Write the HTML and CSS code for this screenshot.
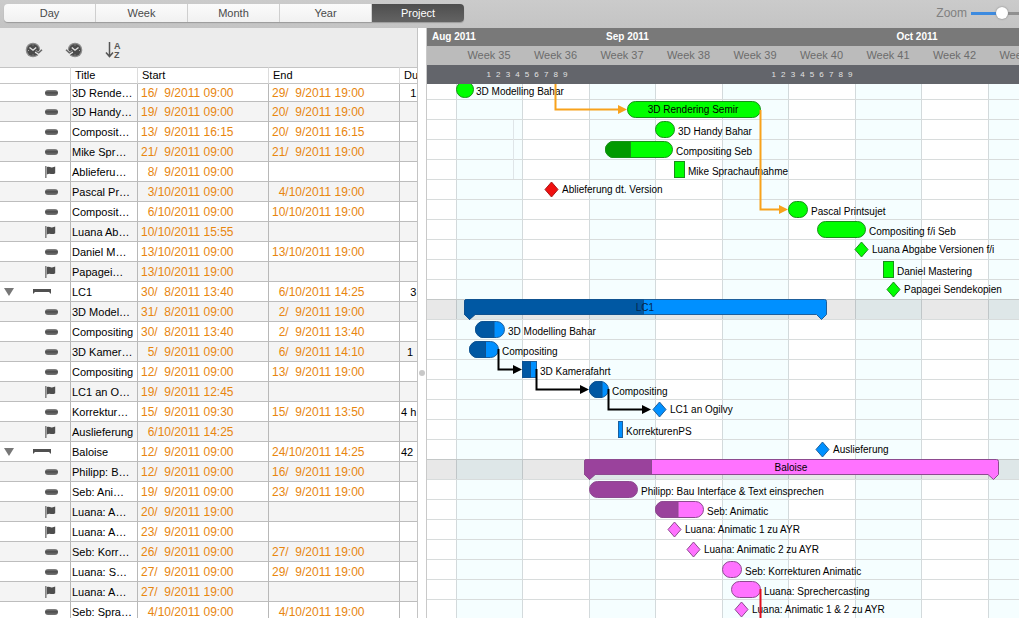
FILE: index.html
```html
<!DOCTYPE html>
<html lang="en">
<head>
<meta charset="utf-8">
<title>Project timeline</title>
<link rel="stylesheet" href="styles.css">
</head>
<body>
<svg class="defs" aria-hidden="true">
  <defs>
    <linearGradient id="pillFill" x1="0" y1="0" x2="0" y2="1">
      <stop offset="0" stop-color="#8a8a8a"/><stop offset=".45" stop-color="#4c4c4c"/><stop offset="1" stop-color="#777"/>
    </linearGradient>
    <symbol id="pill" viewBox="0 0 14 12"><rect x="1" y="3" width="13" height="6" rx="3" fill="url(#pillFill)"/></symbol>
    <symbol id="flag" viewBox="0 0 14 12"><path d="M1 0h1.6v12H1z" fill="#888"/><path d="M2.8 1.2c2-1 3.600.6 5.200.2 1.300-.2 2.200-.7 3.200-.9v6.800c-1.600 1-3 .9-4.600.6-1.500-.2-2.600-.1-3.800.5z" fill="#4e4e4e"/></symbol>
    <symbol id="group" viewBox="0 0 20 12"><path d="M1 3h18v5l-2-2H3L1 8z" fill="#505050"/></symbol>
    <symbol id="clock" viewBox="0 0 18 16"><circle cx="8" cy="8" r="7.300" fill="#8b8b8b"/><circle cx="8" cy="8" r="6" fill="#4b4b4b"/><path d="M4.500 5.500 8 8.200l3.200-2.700" fill="none" stroke="#e4e4e4" stroke-width="1.400"/><path d="M8 2.500v1M3 8.500h1M8 12.500v1" stroke="#aaa"/><path d="M10.500 9.500l3.200 1.800 3-3" fill="none" stroke="#ececec" stroke-width="3"/><path d="M10.500 8.800l3.200 2 3.300-3" fill="none" stroke="#666" stroke-width="1.500"/></symbol>
  </defs>
</svg>

<div class="app">
  <header class="topbar">
    <nav class="segments" aria-label="Time scale">
      <button type="button">Day</button>
      <button type="button">Week</button>
      <button type="button">Month</button>
      <button type="button">Year</button>
      <button type="button" class="active" aria-pressed="true">Project</button>
    </nav>
    <div class="zoom">
      <label for="zoom">Zoom</label>
      <input id="zoom" type="range" min="0" max="100" value="69">
    </div>
  </header>

  <main class="panes">
    <section class="outline">
      <div class="tools">
        <button type="button" aria-label="Later"><svg width="18" height="16"><use href="#clock"/></svg></button>
        <button type="button" aria-label="Earlier"><svg class="mirror" width="18" height="16"><use href="#clock"/></svg></button>
        <button type="button" aria-label="Sort"><svg width="18" height="18" viewBox="0 0 18 18"><path d="M4.500 1v14M1 11.500l3.500 4 3.500-4" fill="none" stroke="#555" stroke-width="1.500"/><text class="az" x="9" y="8">A</text><text class="az" x="9" y="17">Z</text></svg></button>
      </div>
      <table class="tasks">
        <colgroup><col class="c-icon"><col class="c-title"><col class="c-date"><col class="c-date"><col class="c-dur"></colgroup>
        <thead><tr><th></th><th>Title</th><th>Start</th><th>End</th><th>Du</th></tr></thead>
        <tbody>
          <tr><td><svg class="kind"><use href="#pill"/></svg></td><td>3D Rende…</td><td>16/  9/2011 09:00</td><td>29/  9/2011 19:00</td><td>   1</td></tr>
          <tr><td><svg class="kind"><use href="#pill"/></svg></td><td>3D Handy…</td><td>19/  9/2011 09:00</td><td>20/  9/2011 19:00</td><td></td></tr>
          <tr><td><svg class="kind"><use href="#pill"/></svg></td><td>Composit…</td><td>13/  9/2011 16:15</td><td>20/  9/2011 16:15</td><td></td></tr>
          <tr><td><svg class="kind"><use href="#pill"/></svg></td><td>Mike Spr…</td><td>21/  9/2011 09:00</td><td>21/  9/2011 19:00</td><td></td></tr>
          <tr><td><svg class="kind"><use href="#flag"/></svg></td><td>Ablieferu…</td><td>  8/  9/2011 09:00</td><td></td><td></td></tr>
          <tr><td><svg class="kind"><use href="#pill"/></svg></td><td>Pascal Pr…</td><td>  3/10/2011 09:00</td><td>  4/10/2011 19:00</td><td></td></tr>
          <tr><td><svg class="kind"><use href="#pill"/></svg></td><td>Composit…</td><td>  6/10/2011 09:00</td><td>10/10/2011 19:00</td><td></td></tr>
          <tr><td><svg class="kind"><use href="#flag"/></svg></td><td>Luana Ab…</td><td>10/10/2011 15:55</td><td></td><td></td></tr>
          <tr><td><svg class="kind"><use href="#pill"/></svg></td><td>Daniel M…</td><td>13/10/2011 09:00</td><td>13/10/2011 19:00</td><td></td></tr>
          <tr><td><svg class="kind"><use href="#flag"/></svg></td><td>Papagei…</td><td>13/10/2011 19:00</td><td></td><td></td></tr>
          <tr><td><div class="parent"><button type="button" aria-label="Collapse LC1"></button><svg><use href="#group"/></svg></div></td><td>LC1</td><td>30/  8/2011 13:40</td><td>  6/10/2011 14:25</td><td>   3</td></tr>
          <tr><td><svg class="kind"><use href="#pill"/></svg></td><td>3D Model…</td><td>31/  8/2011 09:00</td><td>  2/  9/2011 19:00</td><td></td></tr>
          <tr><td><svg class="kind"><use href="#pill"/></svg></td><td>Compositing</td><td>30/  8/2011 13:40</td><td>  2/  9/2011 13:40</td><td></td></tr>
          <tr><td><svg class="kind"><use href="#pill"/></svg></td><td>3D Kamer…</td><td>  5/  9/2011 09:00</td><td>  6/  9/2011 14:10</td><td>  1</td></tr>
          <tr><td><svg class="kind"><use href="#pill"/></svg></td><td>Compositing</td><td>12/  9/2011 09:00</td><td>13/  9/2011 19:00</td><td></td></tr>
          <tr><td><svg class="kind"><use href="#flag"/></svg></td><td>LC1 an O…</td><td>19/  9/2011 12:45</td><td></td><td></td></tr>
          <tr><td><svg class="kind"><use href="#pill"/></svg></td><td>Korrektur…</td><td>15/  9/2011 09:30</td><td>15/  9/2011 13:50</td><td>4 h</td></tr>
          <tr><td><svg class="kind"><use href="#flag"/></svg></td><td>Auslieferung</td><td>  6/10/2011 14:25</td><td></td><td></td></tr>
          <tr><td><div class="parent"><button type="button" aria-label="Collapse Baloise"></button><svg><use href="#group"/></svg></div></td><td>Baloise</td><td>12/  9/2011 09:00</td><td>24/10/2011 14:25</td><td>42</td></tr>
          <tr><td><svg class="kind"><use href="#pill"/></svg></td><td>Philipp: B…</td><td>12/  9/2011 09:00</td><td>16/  9/2011 19:00</td><td></td></tr>
          <tr><td><svg class="kind"><use href="#pill"/></svg></td><td>Seb: Ani…</td><td>19/  9/2011 09:00</td><td>23/  9/2011 19:00</td><td></td></tr>
          <tr><td><svg class="kind"><use href="#flag"/></svg></td><td>Luana: A…</td><td>20/  9/2011 19:00</td><td></td><td></td></tr>
          <tr><td><svg class="kind"><use href="#flag"/></svg></td><td>Luana: A…</td><td>23/  9/2011 09:00</td><td></td><td></td></tr>
          <tr><td><svg class="kind"><use href="#pill"/></svg></td><td>Seb: Korr…</td><td>26/  9/2011 09:00</td><td>27/  9/2011 19:00</td><td></td></tr>
          <tr><td><svg class="kind"><use href="#pill"/></svg></td><td>Luana: S…</td><td>27/  9/2011 09:00</td><td>29/  9/2011 19:00</td><td></td></tr>
          <tr><td><svg class="kind"><use href="#flag"/></svg></td><td>Luana: A…</td><td>27/  9/2011 19:00</td><td></td><td></td></tr>
          <tr><td><svg class="kind"><use href="#pill"/></svg></td><td>Seb: Spra…</td><td>  4/10/2011 09:00</td><td>  4/10/2011 19:00</td><td></td></tr>
        </tbody>
      </table>
    </section>

    <div class="splitter" role="separator" aria-orientation="vertical"><span class="grip"></span></div>

    <section class="chart">
      <div class="scale months"><span class="first">Aug 2011</span><span>Sep 2011</span><span>Oct 2011</span></div>
      <div class="scale weeks"><span></span><span>Week 35</span><span>Week 36</span><span>Week 37</span><span>Week 38</span><span>Week 39</span><span>Week 40</span><span>Week 41</span><span>Week 42</span><span>Week 43</span></div>
      <div class="scale days">
        <div class="run"><span>1</span><span>2</span><span>3</span><span>4</span><span>5</span><span>6</span><span>7</span><span>8</span><span>9</span></div>
        <div class="run"><span>1</span><span>2</span><span>3</span><span>4</span><span>5</span><span>6</span><span>7</span><span>8</span><span>9</span></div>
      </div>
      <svg class="canvas" role="img" aria-label="Gantt chart">
        <defs>
          <pattern id="weekGrid" patternUnits="userSpaceOnUse" x="456" y="0" width="133" height="20">
            <rect width="66" height="20" fill="#f5feff"/>
            <path d="M.5 0v20M66.500 0v20" stroke="#d3dadc"/>
          </pattern>
          <pattern id="rowGrid" patternUnits="userSpaceOnUse" x="0" y="99" width="20" height="20">
            <path d="M0 .5h20" stroke="#d8dcdc"/>
          </pattern>
          <path id="diamond" d="M0-7.500 6.500 0 0 7.500-6.500 0z"/>
          <path id="arrow" d="M0 0-9-4.500v9z"/>
        </defs>
        <g transform="translate(-427 -84)">
          <rect x="456" y="84" width="4000" height="4000" fill="url(#weekGrid)"/>
          <rect x="427" y="84" width="4000" height="4000" fill="url(#rowGrid)"/>
          <path d="M513.500 120v59" stroke="#dfe5e8"/>
          <path class="band" d="M427 299h4000v20H427zM427 459h4000v20H427z"/>

          <g class="green">
            <rect x="456.500" y="81.500" width="17" height="16" rx="8"/>
            <rect x="627.500" y="101.500" width="133" height="16" rx="8"/>
            <rect x="655.500" y="121.500" width="19" height="16" rx="8"/>
            <rect x="605.500" y="141.500" width="67" height="16" rx="8"/>
            <path class="done" d="M630.500 141.500h-17a8 8 0 0 0 0 16h17z"/>
            <rect x="674.500" y="161.500" width="10" height="16"/>
            <rect x="788.500" y="201.500" width="19" height="16" rx="8"/>
            <rect x="817.500" y="221.500" width="48" height="16" rx="8"/>
            <use href="#diamond" x="861.500" y="249.500"/>
            <rect x="883.500" y="261.500" width="10" height="16"/>
            <use href="#diamond" x="893.500" y="289.500"/>
          </g>
          <use class="red" href="#diamond" x="551.500" y="189.500"/>

          <g class="blue">
            <path d="M466.500 299.500h358q2 0 2 2v13l-5 5-5-5H475l-5.500 5-5-5v-13q0-2 2-2z"/>
            <path class="done" d="M643.500 299.500h-177q-2 0-2 2v13l5 5 5.500-5h168.500z"/>
            <rect x="475.500" y="321.500" width="29" height="16" rx="8"/>
            <path class="done" d="M494 321.500h-10.500a8 8 0 0 0 0 16H494z"/>
            <rect x="469.500" y="341.500" width="29" height="16" rx="8"/>
            <path class="done" d="M485.500 341.500h-8a8 8 0 0 0 0 16h8z"/>
            <rect x="522.500" y="361.500" width="14" height="16"/>
            <path class="done" d="M522.500 361.500h8v16h-8z"/>
            <rect x="589.500" y="381.500" width="19" height="16" rx="8"/>
            <path class="done" d="M602 381.500h-4.500a8 8 0 0 0 0 16h4.500z"/>
            <use href="#diamond" x="659.500" y="409.500"/>
            <rect x="618.500" y="421.500" width="4" height="16"/>
            <use href="#diamond" x="822.500" y="449.500"/>
          </g>

          <g class="pink">
            <path d="M586.500 459.500h410q2 0 2 2v13l-5 5-5.500-5H595l-5.500 5-5-5v-13q0-2 2-2z"/>
            <path class="done" d="M651.500 459.500h-65q-2 0-2 2v13l5 5 5.500-5h56.500z"/>
            <rect class="done" x="589.500" y="481.500" width="48" height="16" rx="8"/>
            <rect x="655.500" y="501.500" width="48" height="16" rx="8"/>
            <path class="done" d="M678 501.500h-14.500a8 8 0 0 0 0 16H678z"/>
            <use href="#diamond" x="674.500" y="529.500"/>
            <use href="#diamond" x="693.500" y="549.500"/>
            <rect x="722.500" y="561.500" width="19" height="16" rx="8"/>
            <rect x="731.500" y="581.500" width="29" height="16" rx="8"/>
            <use href="#diamond" x="741.500" y="609.500"/>
          </g>

          <g class="labels">
            <text x="476" y="95">3D Modelling Bahar</text>
            <text class="mid" x="693" y="113">3D Rendering Semir</text>
            <text x="678" y="135">3D Handy Bahar</text>
            <text x="676" y="155">Compositing Seb</text>
            <text x="688" y="175">Mike Sprachaufnahme</text>
            <text x="562" y="193">Ablieferung dt. Version</text>
            <text x="811" y="215">Pascal Printsujet</text>
            <text x="869" y="235">Compositing f/i Seb</text>
            <text x="872" y="253">Luana Abgabe Versionen f/i</text>
            <text x="897" y="275">Daniel Mastering</text>
            <text x="904" y="293">Papagei Sendekopien</text>
            <text class="mid navy" x="645" y="311">LC1</text>
            <text x="508" y="335">3D Modelling Bahar</text>
            <text x="502" y="355">Compositing</text>
            <text x="540" y="375">3D Kamerafahrt</text>
            <text x="612" y="395">Compositing</text>
            <text x="670" y="413">LC1 an Ogilvy</text>
            <text x="626" y="435">KorrekturenPS</text>
            <text x="833" y="453">Auslieferung</text>
            <text class="mid" x="791" y="471">Baloise</text>
            <text x="641" y="495">Philipp: Bau Interface &amp; Text einsprechen</text>
            <text x="707" y="515">Seb: Animatic</text>
            <text x="685" y="533">Luana: Animatic 1 zu AYR</text>
            <text x="704" y="553">Luana: Animatic 2 zu AYR</text>
            <text x="745" y="575">Seb: Korrekturen Animatic</text>
            <text x="764" y="595">Luana: Sprechercasting</text>
            <text x="752" y="613">Luana: Animatic 1 &amp; 2 zu AYR</text>
          </g>

          <g class="link amber">
            <path d="M555.500 84v25.500H620M760.500 110v99.500H781"/>
            <use href="#arrow" x="627" y="109.500"/><use href="#arrow" x="788" y="209.500"/>
          </g>
          <g class="link black">
            <path d="M498.500 349v20.500H515M536.500 369v20.500H582M608.500 389v20.500H644"/>
            <use href="#arrow" x="522" y="369.500"/><use href="#arrow" x="589" y="389.500"/><use href="#arrow" x="651" y="409.500"/>
          </g>
          <path class="overdue" d="M760.500 589v2000"/>
        </g>
      </svg>
    </section>
  </main>
</div>
</body>
</html>
```
FILE: styles.css
```css
* { box-sizing: border-box; }
body {
  margin: 0;
  font-family: "Liberation Sans", Arial, sans-serif;
  font-size: 11px;
  color: #000;
  background: #fff;
}
button {
  margin: 0;
  padding: 0;
  border: 0;
  background: none;
  font: inherit;
  color: inherit;
}
.defs { position: absolute; width: 0; height: 0; }
.app { display: flex; flex-direction: column; height: 100vh; overflow: hidden; }

.topbar {
  flex: none;
  display: flex;
  justify-content: space-between;
  height: 28px;
  padding: 4px 0 5px 4px;
  background: linear-gradient(#cbcbcb, #c4c4c4);
  overflow: hidden;
}
.segments {
  display: flex;
  height: 18px;
  border-radius: 4px;
  box-shadow: 0 1px 1px #9a9a9a;
  overflow: hidden;
}
.segments button {
  width: 92px;
  background: linear-gradient(#fbfbfb, #f1f1f1);
  border-right: 1px solid #cfcfcf;
  color: #4a4a4a;
  font-size: 11px;
}
.segments .active { background: linear-gradient(#4e4e4e, #636363); border-right: 0; color: #fff; }
.zoom { display: flex; align-items: center; gap: 4px; height: 18px; color: #808080; font-size: 12px; }
.zoom input {
  appearance: none;
  width: 48px;
  height: 14px;
  margin: 0;
  background: linear-gradient(90deg, #3d8be0 30px, #909090 30px) center / 100% 3px no-repeat;
}
.zoom input::-webkit-slider-thumb {
  appearance: none;
  width: 12px;
  height: 12px;
  border-radius: 50%;
  background: #fff;
  box-shadow: 0 0 2px #777;
}

.panes { flex: 1; display: flex; min-height: 0; }
.outline { flex: none; width: 418px; overflow: hidden; border-right: 1px solid #c4c4c4; }
.tools { display: flex; align-items: center; gap: 22px; height: 39px; padding: 4px 0 0 25px; background: #ececec; }
.tools button { display: flex; }
.mirror { transform: scaleX(-1); }
.az { font-size: 9px; font-weight: bold; fill: #555; }

.tasks { width: 100%; table-layout: fixed; border-collapse: separate; border-spacing: 0; }
.c-icon { width: 71px; }
.c-title { width: 67px; }
.c-date { width: 131px; }
.c-dur { width: 17px; }
.tasks th {
  height: 17px;
  padding: 0 0 0 4px;
  border-top: 1px solid #c4c4c4;
  border-bottom: 1px solid #c4c4c4;
  border-right: 1px solid #dcdcdc;
  font-size: 11px;
  font-weight: normal;
  line-height: 15px;
  text-align: left;
  white-space: nowrap;
}
.tasks td {
  height: 20px;
  padding: 0 0 0 1px;
  border-right: 1px solid #b8b8b8;
  border-bottom: 1px solid #bdbdbd;
  line-height: 18px;
  white-space: pre;
  overflow: hidden;
}
.tasks tr > :last-child { border-right: 0; }
.tasks tr:first-child td { height: 18px; line-height: 16px; }
.tasks tbody tr:nth-child(even) { background: #f4f4f4; }
.tasks td:nth-child(3), .tasks td:nth-child(4) { padding-left: 3px; color: #e8860f; font-size: 12px; }
.kind { display: block; width: 14px; height: 12px; margin-left: 43px; }
.parent { display: flex; align-items: center; gap: 18px; padding-left: 3px; }
.parent button { border: 5px solid transparent; border-top: 8px solid #777; border-bottom: 0; }
.parent svg { width: 20px; height: 12px; }

.splitter { flex: none; display: flex; align-items: center; justify-content: center; width: 9px; padding-top: 100px; border-right: 1px solid #c9c9c9; }
.grip { width: 6px; height: 6px; border-radius: 50%; background: #c8c8c8; }

.chart { flex: 1; min-width: 0; display: flex; flex-direction: column; overflow: hidden; }
.scale { flex: none; display: grid; overflow: hidden; text-align: center; }
.months { grid-template-columns: 58px 285px 294px; height: 18px; line-height: 17px; background: #797979; color: #fff; font-size: 10px; font-weight: bold; }
.months .first { padding-left: 5px; text-align: left; white-space: nowrap; }
.weeks { grid-template-columns: 29px 66px 67px 66px 67px 66px 67px 66px 67px 66px; height: 19px; line-height: 19px; background: #bbb; color: #6c6c6c; }
.days { grid-template-columns: 86px 86px; column-gap: 199px; height: 19px; padding-left: 57px; line-height: 19px; background: #63656b; color: #e2e2e2; font-size: 8px; }
.run { display: grid; grid-template-columns: repeat(9, 1fr); }

.canvas { flex: 1; display: block; width: 100%; min-height: 0; }
.band { fill: #000; fill-opacity: .09; }
.green { fill: #0f0; stroke: #189018; }
.green .done { fill: #009a00; }
.red { fill: #f01010; stroke: #a81818; }
.blue { fill: #0090ff; stroke: #1d5f9c; }
.blue .done { fill: #0058a3; stroke: #0f5290; }
.pink { fill: #ff72ff; stroke: #8d4a90; }
.pink .done { fill: #9a429c; }
.labels { font-size: 10px; fill: #000; }
.labels .mid { text-anchor: middle; }
.labels .navy { fill: #06264a; }
.link { stroke-width: 2; }
.link path { fill: none; }
.link use { stroke: none; }
.amber { stroke: #f8a21c; fill: #f8a21c; }
.black { stroke: #000; fill: #000; }
.link #arrow { stroke: none; }
.overdue { stroke: #e01020; stroke-width: 2; }
```
